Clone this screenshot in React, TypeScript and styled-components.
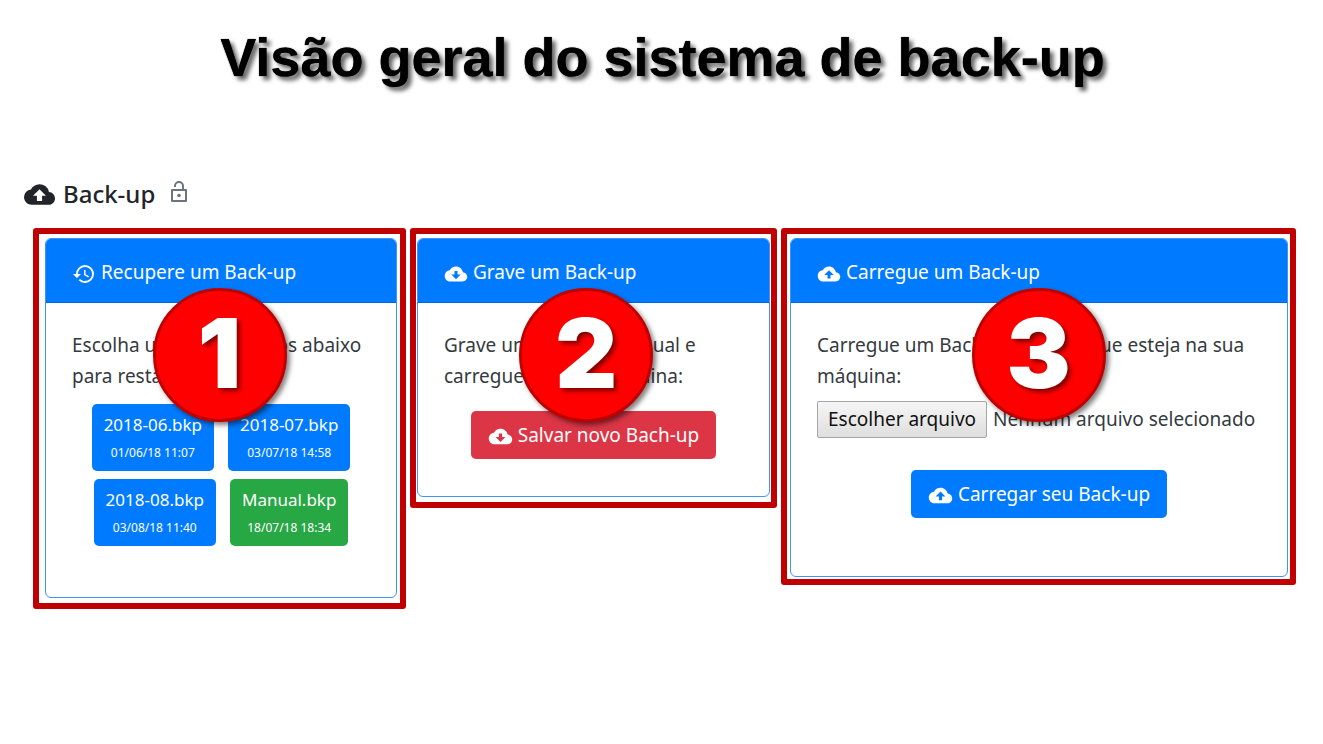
import React from 'react';
import styled, { createGlobalStyle } from 'styled-components';
import { MdBackup, MdHistory } from 'react-icons/md';
import { IoMdCloudDownload, IoMdCloudUpload } from 'react-icons/io';

const Global = createGlobalStyle`
  *, *::before, *::after { box-sizing: border-box; }
  body {
    margin: 0;
    background: #fff;
    color: #212529;
    font-family: 'Noto Sans', 'Open Sans', sans-serif;
    font-size: 19px;
    line-height: 31px;
  }
`;

const Page = styled.main`
  padding: 24px 27px 40px 33px;
`;

const Title = styled.h1`
  margin: 0;
  padding-right: 4px;
  text-align: center;
  font-family: 'Liberation Sans', Arial, sans-serif;
  font-weight: 700;
  font-size: 54px;
  line-height: 66px;
  color: #000;
  text-shadow: 0 0 1px #000, 4px 4px 4px rgba(0, 0, 0, 0.6);
`;

const Heading = styled.h2`
  display: flex;
  align-items: center;
  gap: 8px;
  margin: 86px 0 0 -9px;
  font-size: 24px;
  line-height: 36px;
  font-weight: 500;
`;

const LockButton = styled.button`
  display: flex;
  margin: 0 0 4px 6px;
  padding: 0;
  border: 0;
  background: none;
  color: #6c757d;
`;

const Frames = styled.div`
  display: grid;
  grid-template-columns: minmax(0, 373fr) minmax(0, 367fr) minmax(0, 515fr);
  align-items: start;
  gap: 4px;
  margin-top: 16px;
`;

const Frame = styled.section<{ $inset: string }>`
  position: relative;
  border: 6px solid #c00000;
  border-radius: 3px;
  padding: ${(p) => p.$inset};
`;

const Card = styled.div`
  border: 1px solid #3d95fb;
  border-radius: 6px;
  overflow: hidden;
`;

const CardHeader = styled.h3`
  display: flex;
  align-items: center;
  gap: 5px;
  margin: 0;
  padding: 18px 26px 14px;
  border-bottom: 1px solid #0069dc;
  background: #007bff;
  color: #fff;
  font-size: 19px;
  line-height: 31px;
  font-weight: 400;
  svg { margin-top: 2px; font-size: 24px; }
`;

const CardBody = styled.div<{ $bottom: number }>`
  padding: 27px 26px ${(p) => p.$bottom}px;
`;

const Text = styled.p`
  margin: 0;
  color: #343a40;
  white-space: nowrap;
`;

const Files = styled.div`
  display: flex;
  flex-wrap: wrap;
  justify-content: center;
  gap: 8px 14px;
  margin-top: 12px;
`;

const Button = styled.button<{ $color: string }>`
  display: flex;
  align-items: center;
  justify-content: center;
  gap: 5px;
  border: 0;
  border-radius: 5px;
  padding: 9px 17px 8px;
  background: ${(p) => p.$color};
  color: #fff;
  font: inherit;
  svg { margin-top: 2px; font-size: 25px; }
`;

const FileButton = styled(Button)`
  flex-direction: column;
  gap: 0;
  padding: 7px 12px 4px;
  font-size: 17px;
  line-height: 28px;
  small { font-size: 12px; }
`;

const Action = styled.div<{ $top: number }>`
  display: flex;
  justify-content: center;
  margin-top: ${(p) => p.$top}px;
`;

const FileRow = styled.div`
  display: flex;
  align-items: center;
  gap: 6px;
  margin-top: 9px;
  color: #343a40;
  white-space: nowrap;
`;

const FileInput = styled.input`
  position: absolute;
  width: 1px;
  height: 1px;
  opacity: 0;
`;

const FileLabel = styled.label`
  padding: 2px 10px;
  border: 1px solid #a6a6a6;
  border-radius: 2px;
  background: linear-gradient(#f6f6f6, #dedede);
  color: #111;
`;

const Badge = styled.span<{ $center: string }>`
  position: absolute;
  top: 54px;
  left: ${(p) => p.$center};
  display: flex;
  align-items: center;
  justify-content: center;
  width: 134px;
  height: 134px;
  margin-left: -67px;
  padding-bottom: 5px;
  border: 3px solid #c00000;
  border-radius: 50%;
  background: #f00;
  box-shadow: 3px 3px 5px rgba(0, 0, 0, 0.5);
  color: #fff;
  font-family: Inter, sans-serif;
  font-size: 96px;
  font-weight: 900;
  line-height: 124px;
  text-shadow: 3px 3px 4px rgba(0, 0, 0, 0.5);
`;

const backups = [
  { name: '2018-06.bkp', date: '01/06/18 11:07', color: '#007bff' },
  { name: '2018-07.bkp', date: '03/07/18 14:58', color: '#007bff' },
  { name: '2018-08.bkp', date: '03/08/18 11:40', color: '#007bff' },
  { name: 'Manual.bkp', date: '18/07/18 18:34', color: '#28a745' },
];

export default function App() {
  return (
    <Page>
      <Global />
      <Title>Visão geral do sistema de back-up</Title>
      <Heading>
        <MdBackup size={31} />
        Back-up
        <LockButton type="button" aria-label="Desbloquear">
          <svg width="20" height="24" viewBox="0 0 20 24" fill="none" stroke="currentColor" strokeWidth="2">
            <path d="M3 10H17V21H3Z" strokeLinejoin="round" />
            <path d="M6 7V6A4 4 0 0 1 14 6V10" />
            <circle cx="10" cy="15.5" r="1.8" fill="currentColor" stroke="none" />
          </svg>
        </LockButton>
      </Heading>
      <Frames>
        <Frame $inset="4px 3px 5px 6px">
          <Card>
            <CardHeader>
              <MdHistory />
              Recupere um Back-up
            </CardHeader>
            <CardBody $bottom={51}>
              <Text>
                Escolha um dos Back-ups abaixo
                <br />
                para restaurar:
              </Text>
              <Files>
                {backups.map((b) => (
                  <FileButton key={b.name} type="button" $color={b.color}>
                    {b.name}
                    <small>{b.date}</small>
                  </FileButton>
                ))}
              </Files>
            </CardBody>
          </Card>
          <Badge $center="50%">1</Badge>
        </Frame>
        <Frame $inset="4px 1px 5px 1px">
          <Card>
            <CardHeader>
              <IoMdCloudDownload />
              Grave um Back-up
            </CardHeader>
            <CardBody $bottom={37}>
              <Text>
                Grave um Back-up manual e
                <br />
                carregue em sua máquina:
              </Text>
              <Action $top={19}>
                <Button type="button" $color="#dc3545">
                  <IoMdCloudDownload />
                  Salvar novo Bach-up
                </Button>
              </Action>
            </CardBody>
          </Card>
          <Badge $center="48%">2</Badge>
        </Frame>
        <Frame $inset="4px 2px 2px 3px">
          <Card>
            <CardHeader>
              <IoMdCloudUpload />
              Carregue um Back-up
            </CardHeader>
            <CardBody $bottom={58}>
              <Text>
                Carregue um Back-up manual que esteja na sua
                <br />
                máquina:
              </Text>
              <FileRow>
                <FileInput id="backup-file" type="file" />
                <FileLabel htmlFor="backup-file">Escolher arquivo</FileLabel>
                <span>Nenhum arquivo selecionado</span>
              </FileRow>
              <Action $top={32}>
                <Button type="button" $color="#007bff">
                  <IoMdCloudUpload />
                  Carregar seu Back-up
                </Button>
              </Action>
            </CardBody>
          </Card>
          <Badge $center="50%">3</Badge>
        </Frame>
      </Frames>
    </Page>
  );
}
